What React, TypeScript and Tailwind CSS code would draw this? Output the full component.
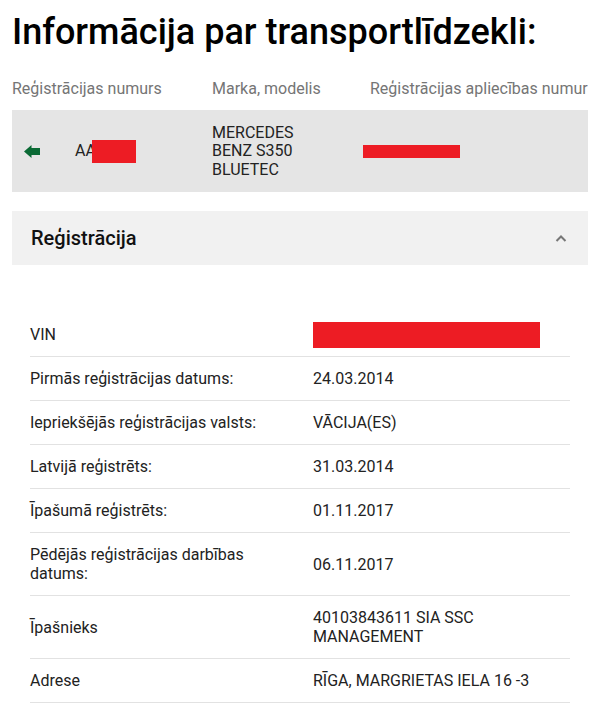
import React from 'react';

const rows: { label: string; value: React.ReactNode }[] = [
  {
    label: 'VIN',
    value: (
      <div className="h-[19px] flex items-center">
        <div className="w-[227px] h-[26px] shrink-0 bg-[#ed1c24]" />
      </div>
    ),
  },
  { label: 'Pirmās reģistrācijas datums:', value: '24.03.2014' },
  { label: 'Iepriekšējās reģistrācijas valsts:', value: 'VĀCIJA(ES)' },
  { label: 'Latvijā reģistrēts:', value: '31.03.2014' },
  { label: 'Īpašumā reģistrēts:', value: '01.11.2017' },
  { label: 'Pēdējās reģistrācijas darbības datums:', value: '06.11.2017' },
  { label: 'Īpašnieks', value: '40103843611 SIA SSC MANAGEMENT' },
  { label: 'Adrese', value: 'RĪGA, MARGRIETAS IELA 16 -3' },
];

const App: React.FC = () => {
  return (
    <div className="min-h-screen bg-white px-3 font-['Roboto',sans-serif] text-[#222]">
      <h1 className="pt-[9px] text-[36px] leading-[46px] font-medium text-black whitespace-nowrap">
        Informācija par transportlīdzekli:
      </h1>

      {/* vehicle summary */}
      <div className="mt-[24px] overflow-hidden">
        <div className="flex text-base leading-[19px] text-[#757575] whitespace-nowrap">
          <div className="w-[200px] shrink-0">Reģistrācijas numurs</div>
          <div className="w-[158px] shrink-0">Marka, modelis</div>
          <div className="shrink-0">Reģistrācijas apliecības numurs</div>
        </div>
        <div className="mt-[12px] h-[82px] flex items-center bg-[#e5e5e5] text-base leading-[18.5px]">
          <div className="w-[200px] shrink-0 flex items-center pl-3">
            <svg width="16" height="13" viewBox="0 0 16 13" className="shrink-0">
              <polygon points="0,6.5 7.5,0 7.5,3 16,3 16,10 7.5,10 7.5,13" fill="#0b6a35" />
            </svg>
            <span className="ml-[35px]">AA</span>
            <div className="w-[44px] h-[23px] -ml-[4px] bg-[#ed1c24]" />
          </div>
          <div className="w-[158px] shrink-0 pt-[1px]">
            MERCEDES
            <br />
            BENZ S350
            <br />
            BLUETEC
          </div>
          <div className="shrink-0 -ml-[7px] pt-[1px]">
            <div className="w-[97px] h-[13px] bg-[#ed1c24]" />
          </div>
        </div>
      </div>

      {/* registration section */}
      <div className="mt-[19px] h-[54px] flex items-center justify-between bg-[#f1f1f1] pl-[19px] pr-[21px]">
        <span className="text-xl leading-6 font-medium text-[#111]">Reģistrācija</span>
        <svg width="12" height="7" viewBox="0 0 12 7">
          <polyline points="1.5,6 6,1.5 10.5,6" fill="none" stroke="#777" strokeWidth="2" />
        </svg>
      </div>

      <div className="mx-[18px] mt-[48px]">
        {rows.map((r) => (
          <div
            key={r.label}
            className="grid grid-cols-[283px_1fr] items-center border-b border-[#e2e2e2] py-3 text-base leading-[19px]"
          >
            <div className="pr-6">{r.label}</div>
            <div className="pr-4">{r.value}</div>
          </div>
        ))}
      </div>
    </div>
  );
};

export default App;
